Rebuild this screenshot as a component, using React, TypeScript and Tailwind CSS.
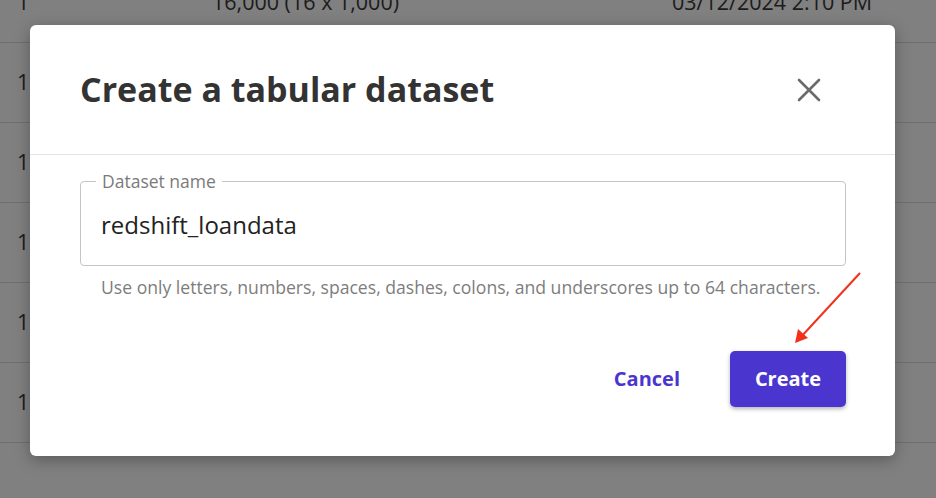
const ROWS = [0, 1, 2, 3, 4, 5];

export default function App() {
  return (
    <div
      className="relative w-[936px] h-[498px] overflow-hidden bg-[#808080]"
      style={{ fontFamily: '"Open Sans", "Noto Sans", sans-serif' }}
    >
      {/* Table behind the overlay */}
      <div className="-mt-[37px] flex flex-col">
        {ROWS.map((i) => (
          <div
            key={i}
            className="flex items-center h-[80px] border-b border-[#6f6f6f] text-[21.5px] text-[#1c1c1c]"
          >
            <span className="w-[212px] pl-[17px]">1</span>
            <span className="w-[460px]">16,000 (16 x 1,000)</span>
            <span>03/12/2024 2:10 PM</span>
          </div>
        ))}
      </div>

      {/* Modal */}
      <div className="absolute left-[30px] top-[25px] w-[865px] h-[431px] bg-white rounded-[6px] shadow-[0_4px_16px_rgba(0,0,0,0.3)] flex flex-col">
        <div className="h-[130px] flex items-center justify-between pl-[50px] pr-[74px] border-b border-[#e4e4e4]">
          <h1 className="text-[34px] font-bold text-[#333333]">
            Create a tabular dataset
          </h1>
          <svg width="24" height="24" viewBox="0 0 24 24" className="text-[#6b6b6b]">
            <path
              d="M2 2 L22 22 M22 2 L2 22"
              stroke="currentColor"
              strokeWidth="2.6"
              strokeLinecap="round"
            />
          </svg>
        </div>

        <div className="flex flex-col pr-[49px] pl-[50px] pt-[26px]">
          <div className="relative h-[85px] border border-[#c4c4c4] rounded-[4px] flex items-center px-[20px]">
            <span className="absolute -top-[12px] left-[15px] bg-white px-[6px] text-[17.5px] leading-[22px] text-[#7a7a7a]">
              Dataset name
            </span>
            <span className="text-[24px] text-[#222222] mt-[2px]">redshift_loandata</span>
          </div>
          <p className="pl-[21px] pt-[10px] text-[17.6px] leading-[22px] text-[#7d7d7d]">
            Use only letters, numbers, spaces, dashes, colons, and underscores up to 64 characters.
          </p>
          <div className="flex items-center justify-end gap-[50px] mt-[53px]">
            <button className="text-[20px] font-bold text-[#4a36cf]">Cancel</button>
            <button className="w-[116px] h-[56px] rounded-[5px] bg-[#4a36cf] text-white text-[20px] font-bold shadow-[0_2px_4px_rgba(0,0,0,0.3)]">
              Create
            </button>
          </div>
        </div>
      </div>

      {/* Red annotation arrow */}
      <svg className="absolute left-0 top-0" width="936" height="498">
        <line x1="860" y1="273" x2="800" y2="338" stroke="#f0321c" strokeWidth="2" />
        <path d="M795 343 L798 329 L808 338 Z" fill="#f0321c" />
      </svg>
    </div>
  );
}
